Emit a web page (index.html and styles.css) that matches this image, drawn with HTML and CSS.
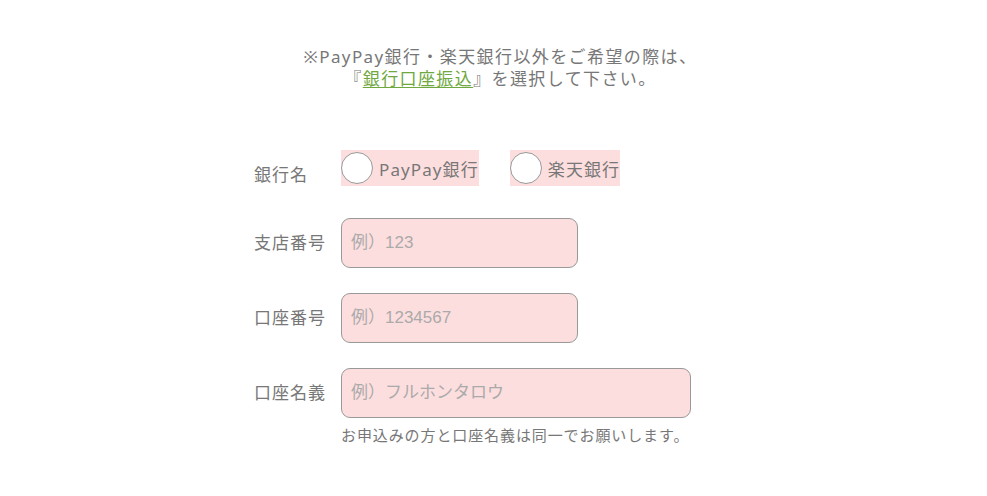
FILE: index.html
```html
<!DOCTYPE html>
<html lang="ja">
<head>
<meta charset="utf-8">
<title>口座情報</title>
<link rel="stylesheet" href="styles.css">
</head>
<body>
<div class="page">
  <p class="intro">※PayPay銀行・楽天銀行以外をご希望の際は、<br>『<a href="#" class="link">銀行口座振込</a>』を選択して下さい。</p>
  <div class="form">
    <div class="row row-radio">
      <div class="label label-radio">銀行名</div>
      <div class="radios">
        <label class="radio"><span class="circle"></span><span class="rtext">PayPay銀行</span></label>
        <label class="radio"><span class="circle"></span><span class="rtext">楽天銀行</span></label>
      </div>
    </div>
    <div class="row">
      <div class="label">支店番号</div>
      <input class="field field-short" type="text" placeholder="例）123">
    </div>
    <div class="row">
      <div class="label">口座番号</div>
      <input class="field field-short" type="text" placeholder="例）1234567">
    </div>
    <div class="row row-last">
      <div class="label">口座名義</div>
      <input class="field field-long" type="text" placeholder="例）フルホンタロウ">
    </div>
    <div class="row-note">
      <p class="note">お申込みの方と口座名義は同一でお願いします。</p>
    </div>
  </div>
</div>
</body>
</html>
```
FILE: styles.css
```css
* { box-sizing: border-box; }
html, body { margin: 0; padding: 0; background: #fff; }
body {
  font-family: "Noto Sans", "Noto Sans CJK JP", sans-serif;
  color: #777;
}
.page {
  width: 987px;
  padding-top: 46px;
}
.intro {
  margin: 0;
  padding-left: 14px;
  text-align: center;
  font-size: 17px;
  line-height: 22px;
  letter-spacing: 1.4px;
  color: #777;
}
.link {
  color: #6fa83e;
  text-decoration: underline;
  text-underline-offset: 2px;
}
.form {
  margin: 60px 0 0 254px;
}
.row {
  display: flex;
  align-items: center;
  margin-bottom: 25px;
}
.row-radio {
  align-items: flex-start;
  margin-bottom: 31px;
}
.row-last { margin-bottom: 6px; }
.label {
  width: 87px;
  font-size: 17px;
  letter-spacing: 1px;
  color: #777;
  line-height: 24px;
}
.label-radio { padding-top: 13px; }
.radios {
  display: flex;
  gap: 31px;
}
.radio {
  display: flex;
  align-items: center;
  height: 36px;
  background: #fddede;
  padding-right: 0;
}
.circle {
  width: 32px;
  height: 32px;
  border-radius: 50%;
  background: #fff;
  border: 1px solid #999;
  margin-right: 6px;
}
.rtext {
  font-size: 17px;
  letter-spacing: 1.1px;
  color: #777;
  line-height: 24px;
  padding-top: 4px;
}
.field {
  height: 50px;
  background: #fddede;
  border: 1px solid #999;
  border-radius: 9px;
  padding: 0 9px;
  font-family: "Liberation Sans", "Noto Sans CJK JP", sans-serif;
  font-size: 17px;
  color: #777;
  outline: none;
}
.field::placeholder { color: #aaa; }
.field-short { width: 237px; }
.field-long { width: 350px; }
.row-note { padding-left: 87px; }
.note {
  margin: 0;
  font-size: 15px;
  letter-spacing: 0.9px;
  line-height: 22px;
  color: #777;
}
```
